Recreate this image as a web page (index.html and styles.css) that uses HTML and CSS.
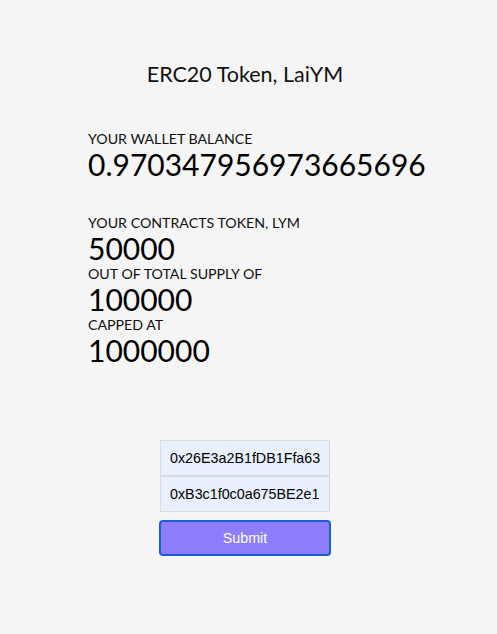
FILE: index.html
```html
<!DOCTYPE html>
<html>
<head>
<meta charset="utf-8">
<link rel="stylesheet" href="styles.css">
</head>
<body>
<div class="app">
  <h1 class="title">ERC20 Token, LaiYM</h1>
  <section class="balance">
    <div class="label">Your wallet balance</div>
    <div class="value">0.970347956973665696</div>
  </section>
  <section class="token">
    <div class="label">Your contracts token, LYM</div>
    <div class="value">50000</div>
    <div class="label">Out of total supply of</div>
    <div class="value">100000</div>
    <div class="label">Capped at</div>
    <div class="value">1000000</div>
  </section>
  <form class="transfer">
    <input class="field" type="text" value="0x26E3a2B1fDB1Ffa63">
    <input class="field" type="text" value="0xB3c1f0c0a675BE2e1">
    <button class="submit" type="button">Submit</button>
  </form>
</div>
</body>
</html>
```
FILE: styles.css
```css
html, body {
  margin: 0;
  padding: 0;
  background: #f5f5f5;
}
body {
  font-family: Lato, "Noto Sans", sans-serif;
  color: #000;
}
.app {
  width: 314px;
  margin-left: 88px;
  padding-top: 62px;
}
.title {
  margin: 0;
  font-size: 21.5px;
  font-weight: 400;
  text-align: center;
  line-height: 24px;
  color: #111;
}
.balance {
  margin-top: 44px;
}
.token {
  margin-top: 33px;
}
.label {
  font-size: 14.2px;
  text-transform: uppercase;
  line-height: 17px;
  color: #111;
}
.value {
  font-size: 30px;
  line-height: 34px;
  white-space: nowrap;
}
.transfer {
  margin-top: 73px;
  display: flex;
  flex-direction: column;
  align-items: center;
}
.field {
  box-sizing: border-box;
  width: 170px;
  height: 36px;
  margin: 0;
  padding: 0 9px;
  border: 1px solid #dadada;
  background: #e8f0fe;
  font-family: "Liberation Sans", Arial, sans-serif;
  font-size: 14.3px;
  color: #000;
  outline: none;
}
.submit {
  box-sizing: border-box;
  margin-top: 8px;
  width: 172px;
  height: 36px;
  border: 2px solid #1a5fd0;
  border-radius: 4px;
  background: #8e7dfa;
  color: #fff;
  font-family: "Liberation Sans", Arial, sans-serif;
  font-size: 14.3px;
}
```
